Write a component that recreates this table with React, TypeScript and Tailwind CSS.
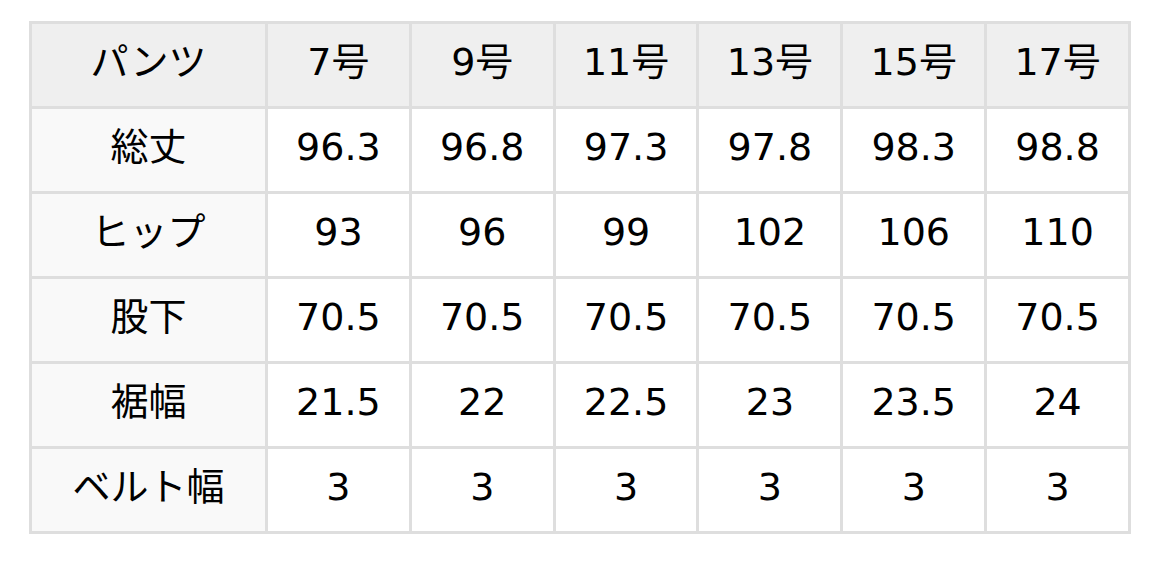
const headers = ["7号", "9号", "11号", "13号", "15号", "17号"];

const rows: { label: string; values: string[] }[] = [
  { label: "総丈", values: ["96.3", "96.8", "97.3", "97.8", "98.3", "98.8"] },
  { label: "ヒップ", values: ["93", "96", "99", "102", "106", "110"] },
  { label: "股下", values: ["70.5", "70.5", "70.5", "70.5", "70.5", "70.5"] },
  { label: "裾幅", values: ["21.5", "22", "22.5", "23", "23.5", "24"] },
  { label: "ベルト幅", values: ["3", "3", "3", "3", "3", "3"] },
];

function Cell({ children, className = "" }: { children: React.ReactNode; className?: string }) {
  return (
    <div className={`flex items-center justify-center h-[82px] pb-[6px] text-[38px] leading-none text-black ${className}`}>
      {children}
    </div>
  );
}

export default function App() {
  return (
    <div className="min-h-[565px] bg-white pl-[29px] pt-[21px] font-['DejaVu_Sans','Noto_Sans_CJK_JP',sans-serif]">
      <div className="grid w-[1102px] grid-cols-[233px_repeat(6,1fr)] gap-[3px] border-[3px] border-[#dedede] bg-[#dedede]">
        <Cell className="bg-[#efefef]">パンツ</Cell>
        {headers.map((h) => (
          <Cell key={h} className="bg-[#efefef]">
            {h}
          </Cell>
        ))}
        {rows.map((row) => (
          <>
            <Cell key={row.label} className="bg-[#f9f9f9]">
              {row.label}
            </Cell>
            {row.values.map((v, i) => (
              <Cell key={row.label + i} className="bg-white">
                {v}
              </Cell>
            ))}
          </>
        ))}
      </div>
    </div>
  );
}
